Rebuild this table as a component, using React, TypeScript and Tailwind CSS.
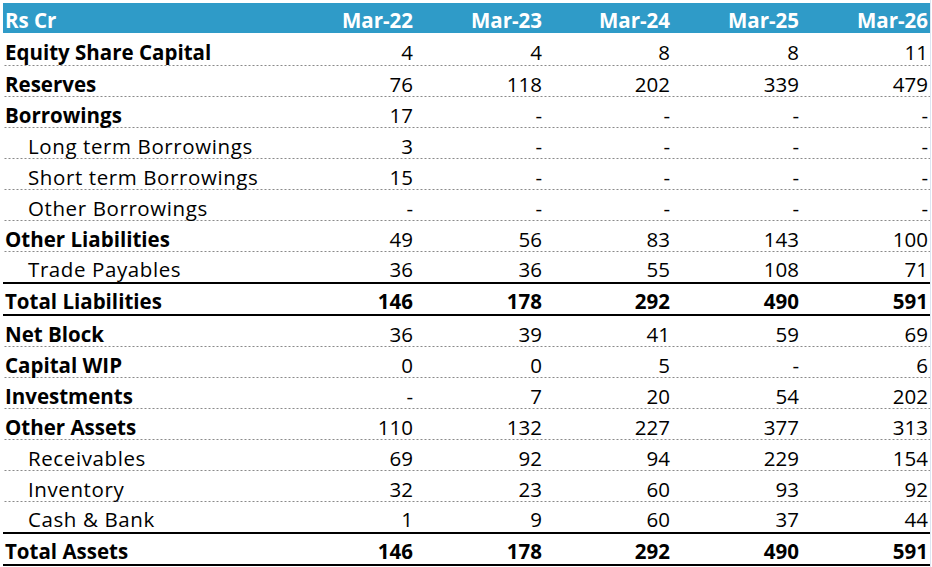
type Row = {
  label: string
  values: string[]
  kind: 'head' | 'sub' | 'total'
  // line under the row: dotted by default, solid before/after a total
  solid?: boolean
}

const years = ['Mar-22', 'Mar-23', 'Mar-24', 'Mar-25', 'Mar-26']

const rows: Row[] = [
  { label: 'Equity Share Capital', values: ['4', '4', '8', '8', '11'], kind: 'head' },
  { label: 'Reserves', values: ['76', '118', '202', '339', '479'], kind: 'head' },
  { label: 'Borrowings', values: ['17', '-', '-', '-', '-'], kind: 'head' },
  { label: 'Long term Borrowings', values: ['3', '-', '-', '-', '-'], kind: 'sub' },
  { label: 'Short term Borrowings', values: ['15', '-', '-', '-', '-'], kind: 'sub' },
  { label: 'Other Borrowings', values: ['-', '-', '-', '-', '-'], kind: 'sub' },
  { label: 'Other Liabilities', values: ['49', '56', '83', '143', '100'], kind: 'head' },
  { label: 'Trade Payables', values: ['36', '36', '55', '108', '71'], kind: 'sub', solid: true },
  { label: 'Total Liabilities', values: ['146', '178', '292', '490', '591'], kind: 'total', solid: true },
  { label: 'Net Block', values: ['36', '39', '41', '59', '69'], kind: 'head' },
  { label: 'Capital WIP', values: ['0', '0', '5', '-', '6'], kind: 'head' },
  { label: 'Investments', values: ['-', '7', '20', '54', '202'], kind: 'head' },
  { label: 'Other Assets', values: ['110', '132', '227', '377', '313'], kind: 'head' },
  { label: 'Receivables', values: ['69', '92', '94', '229', '154'], kind: 'sub' },
  { label: 'Inventory', values: ['32', '23', '60', '93', '92'], kind: 'sub' },
  { label: 'Cash & Bank', values: ['1', '9', '60', '37', '44'], kind: 'sub', solid: true },
  { label: 'Total Assets', values: ['146', '178', '292', '490', '591'], kind: 'total', solid: true },
]

const grid = 'grid grid-cols-[283px_129px_129px_128px_129px_129px]'

export default function App() {
  return (
    <div className="flex h-[567px] w-[932px] bg-white font-['Open_Sans','Noto_Sans',sans-serif] text-[20.5px] leading-none text-black">
      <div className="mt-[3px] ml-[3px] flex w-[927px] flex-col">
        {/* header */}
        <div className={`${grid} h-[30px] items-center bg-[#2f9bc8] font-bold text-white`}>
          <div className="pt-[4px] pl-[2px]">Rs Cr</div>
          {years.map((y) => (
            <div key={y} className="pt-[4px] pr-[2px] text-right">
              {y}
            </div>
          ))}
        </div>

        {rows.map((r, i) => (
          <div
            key={r.label}
            className={`${grid} items-center ${i === 0 ? 'h-[33px]' : r.solid ? 'h-[32px]' : 'h-[31px]'} ${
              r.solid
                ? 'border-b-2 border-black'
                : 'bg-[linear-gradient(to_right,#8a8a8a_50%,transparent_50%)] bg-[length:4px_1px] bg-bottom bg-repeat-x'
            }`}
          >
            <div className={r.kind === 'sub' ? 'pt-[5px] pl-[25px] tracking-[0.6px]' : 'pt-[5px] pl-[2px] font-bold'}>
              {r.label}
            </div>
            {r.values.map((v, j) => (
              <div key={j} className={`pt-[5px] pr-[2px] text-right ${r.kind === 'total' ? 'font-bold' : ''}`}>
                {v}
              </div>
            ))}
          </div>
        ))}
      </div>
      <div className="w-px bg-[#dce6f2]" />
    </div>
  )
}
